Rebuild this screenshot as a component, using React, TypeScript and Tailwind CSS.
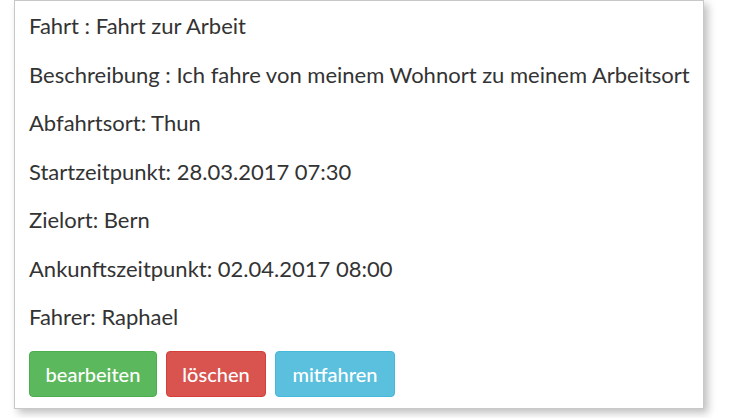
import React from "react";

const lines = [
  "Fahrt : Fahrt zur Arbeit",
  "Beschreibung : Ich fahre von meinem Wohnort zu meinem Arbeitsort",
  "Abfahrtsort: Thun",
  "Startzeitpunkt: 28.03.2017 07:30",
  "Zielort: Bern",
  "Ankunftszeitpunkt: 02.04.2017 08:00",
  "Fahrer: Raphael",
];

export default function App() {
  return (
    <div className="w-[730px] h-[418px] bg-white" style={{ fontFamily: "Lato, 'Open Sans', sans-serif" }}>
      <div className="ml-[14px] w-[690px] h-[409px] border border-[#c8c8c8] bg-white shadow-[4px_4px_8px_rgba(0,0,0,0.25)] pl-[14px] pt-[1px] text-[#333] text-[22px]">
        {lines.map((l) => (
          <p key={l} className="leading-[48.5px] whitespace-nowrap">{l}</p>
        ))}
        <div className="flex gap-[9px] mt-[9.5px]">
          <button className="h-[46px] w-[128px] rounded-[4px] bg-[#5cb85c] border border-[#4cae4c] text-white text-[20px] font-medium">bearbeiten</button>
          <button className="h-[46px] w-[100px] rounded-[4px] bg-[#d9534f] border border-[#d43f3a] text-white text-[20px] font-medium">löschen</button>
          <button className="h-[46px] w-[120px] rounded-[4px] bg-[#5bc0de] border border-[#46b8da] text-white text-[20px] font-medium">mitfahren</button>
        </div>
      </div>
    </div>
  );
}
